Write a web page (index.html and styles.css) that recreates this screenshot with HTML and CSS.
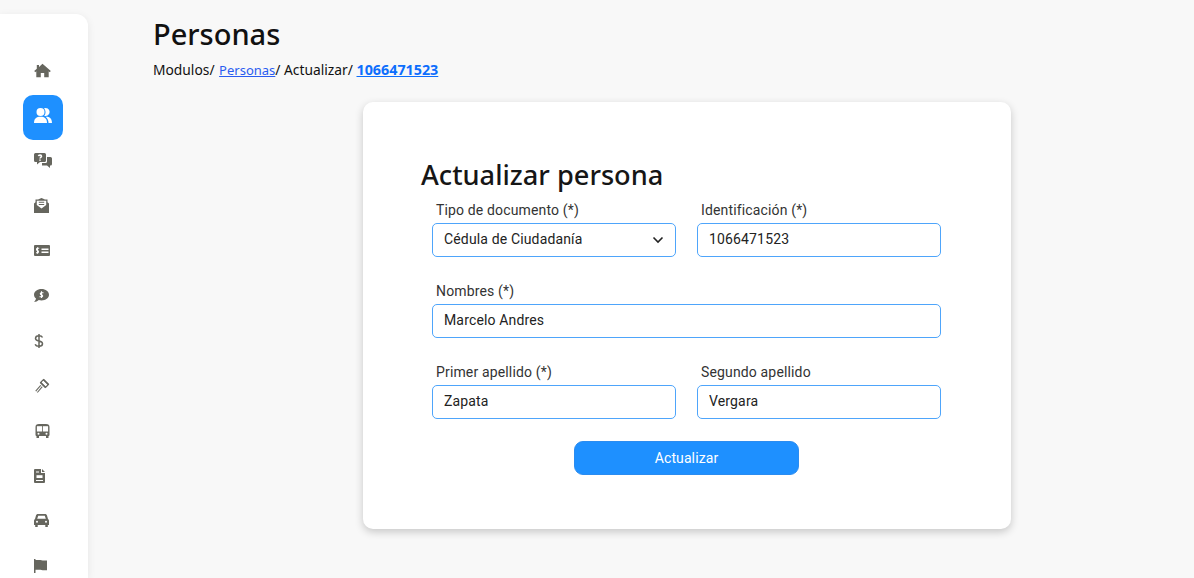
FILE: index.html
```html
<!DOCTYPE html>
<html lang="es">
<head>
    <meta charset="UTF-8">
    <meta name="viewport" content="width=device-width, initial-scale=1.0">
    <title>Personas</title>
    <link rel="stylesheet" href="styles.css">
</head>
<body>
    <!-- sidebar -->
    <nav class="sidebar">
        <a class="nav-item" href="#"><svg viewBox="0 0 18 18"><path d="M8.500 1.800 16.800 9 15.700 10.200 14.700 9.300V15.200H10.200V11H6.800V15.200H2.300V9.300L1.300 10.200 .2 9 2.800 6.800V3H5V4.900Z"/></svg></a>
        <a class="nav-item active" href="#"><svg viewBox="0 0 18 18"><circle cx="6.500" cy="5" r="4"/><path d="M0 16C0 11.500 2.500 9.800 6.500 9.800S13 11.500 13 16Z"/><path d="M10 1.300A4 4 0 1 1 10.200 8.700 5.500 5.500 0 0 0 10 1.300ZM11.500 9.800C15.500 9.600 18 11.500 18 16H14.500C14.500 13.500 13.500 11.200 11.500 9.800Z"/></svg></a>
        <a class="nav-item" href="#"><svg viewBox="0 0 18 18"><path d="M1.500 1H10.500A1.500 1.500 0 0 1 12 2.500V8.500A1.500 1.500 0 0 1 10.500 10H6L3 12.500V10H1.500A1.500 1.500 0 0 1 0 8.500V2.500A1.500 1.500 0 0 1 1.500 1Z"/><path d="M13 5H16.500A1.500 1.500 0 0 1 18 6.500V12A1.500 1.500 0 0 1 16.500 13.500H16V16L13 13.500H8V11H11.500A1.500 1.500 0 0 0 13 9.500Z"/><path class="cut" d="M4.500 4.200C4.700 2.700 7.500 2.700 7.500 4.300 7.500 5.300 6 5.300 6 6.500M6 7.500V8.700"/></svg></a>
        <a class="nav-item" href="#"><svg viewBox="0 0 18 18"><path d="M7.500 1 11 2.500H13.500V5.300L15 6.500V16H0V6.500L1.500 5.300V2.500H4Z"/><path class="white" d="M2.800 3.700H12.200V8L7.500 11.500 2.800 8Z"/><path class="dark-thin" d="M4.800 5.300H10.200M4.800 7.500H10.200"/></svg></a>
        <a class="nav-item" href="#"><svg viewBox="0 0 18 18"><rect x="0" y="3" width="16" height="11" rx="1"/><path class="cut" d="M7.500 7.300H14.500M7.500 10.300H14.500"/><path class="cut-thin" d="M5.200 6.300H3.400C2.200 6.300 2.200 8.500 3.500 8.500S4.800 10.700 3.600 10.700H2M3.500 5.300V11.700"/></svg></a>
        <a class="nav-item" href="#"><svg viewBox="0 0 18 18"><path d="M7.500 2C11.700 2 15 4.500 15 7.700S11.700 13.400 7.500 13.400C6.500 13.400 5.600 13.300 4.800 13 3.500 14.300 1.800 15 0 15 1 14 1.800 12.900 2 11.600 .8 10.600 0 9.200 0 7.700 0 4.500 3.300 2 7.500 2Z"/><path class="cut-thin" d="M9.500 5.700H7.200C6 5.700 6 7.700 7.500 7.700S9 9.700 7.800 9.700H5.500M7.500 4.300V11"/></svg></a>
        <a class="nav-item" href="#"><svg viewBox="0 0 18 18"><path class="line" d="M8.500 5.500C8 4.300 6.800 3.800 5 3.800 3 3.800 1.500 4.800 1.500 6.500 1.500 8.200 3.300 8.700 5 9.100 6.800 9.500 8.500 10 8.500 11.700 8.500 13.300 6.800 14.200 5 14.200 3.200 14.200 1.700 13.600 1.200 12.200M5 2V16"/></svg></a>
        <a class="nav-item" href="#"><svg viewBox="0 0 18 18"><path class="line-thick" d="M7.500 9 2.500 14.800"/><path class="cut-thin" d="M7.500 9 2.500 14.800"/><rect class="outline" x="7" y="4.500" width="7" height="4" transform="rotate(45 10.500 6.500)"/><path class="line" d="M9.500 2.500 14.500 7.500M6.500 5.500 11.500 10.500"/></svg></a>
        <a class="nav-item" href="#"><svg viewBox="0 0 18 18"><path d="M5 2H12C14.500 2 15.500 3 15.500 5V13C15.500 13.500 15 14 14.500 14V16H12V14H5V16H2.500V14C2 14 1.500 13.500 1.500 13V5C1.500 3 2.500 2 5 2Z"/><rect class="white" x="2.900" y="4.200" width="5.200" height="5.300"/><rect class="white" x="8.900" y="4.200" width="5.200" height="5.300"/><circle class="white" cx="4.500" cy="11.700" r="1"/><circle class="white" cx="12.500" cy="11.700" r="1"/></svg></a>
        <a class="nav-item" href="#"><svg viewBox="0 0 18 18"><path d="M1 2H7V6H11V15A1 1 0 0 1 10 16H1A1 1 0 0 1 0 15V3A1 1 0 0 1 1 2ZM8 2 11 5H8Z"/><rect class="white" x="2.500" y="8.200" width="6" height="2.800"/><path class="cut-thin" d="M2 13.500H9M2 5H5"/></svg></a>
        <a class="nav-item" href="#"><svg viewBox="0 0 18 18"><path d="M4 2H11C12 2 12.700 2.500 13 3.500L14 7C14.700 7.400 15 8 15 8.800V13H13.800V15H11.300V13H3.700V15H1.200V13H0V8.800C0 8 .3 7.400 1 7L2 3.500C2.300 2.500 3 2 4 2Z"/><path class="white" d="M4.200 3.700H10.800L11.800 6.800H3.200Z"/><circle class="white" cx="3" cy="9.800" r="1"/><circle class="white" cx="12" cy="9.800" r="1"/></svg></a>
        <a class="nav-item" href="#"><svg viewBox="0 0 18 18"><path d="M0 2H1.500V3H5C7 3 8 3.500 10 3.500H13V13.200H10C8 13.200 7 12.700 5 12.700H1.500V16H0Z"/></svg></a>
    </nav>

    <main class="content">
        <h1>Personas</h1>
        <p class="breadcrumb">
            Modulos/ <a href="#">Personas</a>/ Actualizar/ <a class="current" href="#">1066471523</a>
        </p>

        <section class="card">
            <h2>Actualizar persona</h2>
            <form class="form-grid">
                <div class="field">
                    <label for="tipo">Tipo de documento (*)</label>
                    <div class="select-wrap">
                        <select id="tipo">
                            <option>Cédula de Ciudadanía</option>
                        </select>
                        <svg class="chevron" viewBox="0 0 12 12"><path d="M1.500 3.500 6 8 10.500 3.500"/></svg>
                    </div>
                </div>
                <div class="field">
                    <label for="identificacion">Identificación (*)</label>
                    <input id="identificacion" type="text" value="1066471523">
                </div>
                <div class="field wide">
                    <label for="nombres">Nombres (*)</label>
                    <input id="nombres" type="text" value="Marcelo Andres">
                </div>
                <div class="field">
                    <label for="primer">Primer apellido (*)</label>
                    <input id="primer" type="text" value="Zapata">
                </div>
                <div class="field">
                    <label for="segundo">Segundo apellido</label>
                    <input id="segundo" type="text" value="Vergara">
                </div>
                <div class="form-actions wide">
                    <button type="submit">Actualizar</button>
                </div>
            </form>
        </section>
    </main>
</body>
</html>
```

FILE: styles.css
```css
* {
    box-sizing: border-box;
}

body {
    margin: 0;
    height: 100vh;
    overflow: hidden;
    display: flex;
    align-items: flex-start;
    background-color: #f8f8f8;
    color: #212121;
    font-family: Roboto, sans-serif;
}

/* sidebar */
.sidebar {
    flex: none;
    width: 88px;
    height: calc(100vh - 14px);
    margin-top: 14px;
    padding: 36px 0 0 23px;
    overflow: hidden;
    background-color: #fff;
    border-top-right-radius: 12px;
    box-shadow: 0 2px 8px rgba(0, 0, 0, 0.08);
}

.nav-item {
    display: block;
    width: 40px;
    height: 45px;
    padding: 12px 0 0 11px;
    border-radius: 10px;
}

.nav-item svg {
    display: block;
    width: 18px;
    height: 18px;
    fill: #66665e;
}

.nav-item.active {
    background-color: #1e90ff;
}

.nav-item.active svg {
    fill: #fff;
}

.nav-item .cut,
.nav-item .cut-thin {
    fill: none;
    stroke: #fff;
    stroke-width: 1.6;
}

.nav-item .cut-thin {
    stroke-width: 1.1;
}

.nav-item .white {
    fill: #fff;
}

.nav-item .dark-thin {
    fill: none;
    stroke: #66665e;
    stroke-width: 1.1;
}

.nav-item .line,
.nav-item .line-thick {
    fill: none;
    stroke: #66665e;
    stroke-width: 1.5;
}

.nav-item .line-thick {
    stroke-width: 3.2;
}

.nav-item .outline {
    fill: #fff;
    stroke: #66665e;
    stroke-width: 1.3;
}

/* content */
.content {
    flex: 1;
    padding: 14px 0 0 65px;
}

h1 {
    margin: 0;
    font-family: "Noto Sans", sans-serif;
    font-size: 29px;
    font-weight: 500;
    line-height: 40px;
    color: #111;
}

.breadcrumb {
    margin: 6px 0 0;
    font-family: "Noto Sans", sans-serif;
    font-size: 13.8px;
    line-height: 20px;
    color: #111;
}

.breadcrumb a {
    margin-left: 1px;
    color: #2a5cf0;
    font-size: 13px;
}

.breadcrumb a.current {
    margin-left: 0;
    color: #0d6efd;
    font-size: 14.3px;
    font-weight: 700;
}

.card {
    width: 648px;
    height: 427px;
    margin: 22px 0 0 210px;
    padding: 54px 70px 0 58px;
    background-color: #fff;
    border-radius: 10px;
    box-shadow: 0 3px 8px rgba(0, 0, 0, 0.2);
}

h2 {
    margin: 0;
    font-family: "Noto Sans", sans-serif;
    font-size: 27.2px;
    font-weight: 500;
    line-height: 38px;
    color: #161616;
}

.form-grid {
    display: grid;
    grid-template-columns: 244px 244px;
    column-gap: 21px;
    row-gap: 24px;
    margin: 6px 0 0 11px;
}

.field {
    display: flex;
    flex-direction: column;
    min-width: 0;
}

.wide {
    grid-column: 1 / -1;
}

.field label {
    height: 23px;
    padding-left: 4px;
    font-size: 14px;
    line-height: 20px;
    letter-spacing: 0.15px;
    color: #333;
}

.field input,
.field select {
    display: block;
    width: 100%;
    height: 34px;
    padding: 0 11px 2px;
    background-color: #fff;
    border: 1px solid #4ea5fb;
    border-radius: 5px;
    color: #222;
    font-family: Roboto, sans-serif;
    font-size: 14px;
    letter-spacing: 0.15px;
    outline: none;
    appearance: none;
}

.select-wrap {
    position: relative;
}

.chevron {
    position: absolute;
    top: 11px;
    right: 12px;
    width: 12px;
    height: 12px;
    fill: none;
    stroke: #222;
    stroke-width: 1.6;
}

.form-actions {
    display: flex;
    justify-content: center;
    margin-top: -2px;
}

button {
    width: 225px;
    height: 34px;
    background-color: #1e90ff;
    border: 1px solid #2b8cf0;
    border-radius: 9px;
    color: #fff;
    font-family: Roboto, sans-serif;
    font-size: 14px;
    letter-spacing: 0.1px;
    cursor: pointer;
}
```
